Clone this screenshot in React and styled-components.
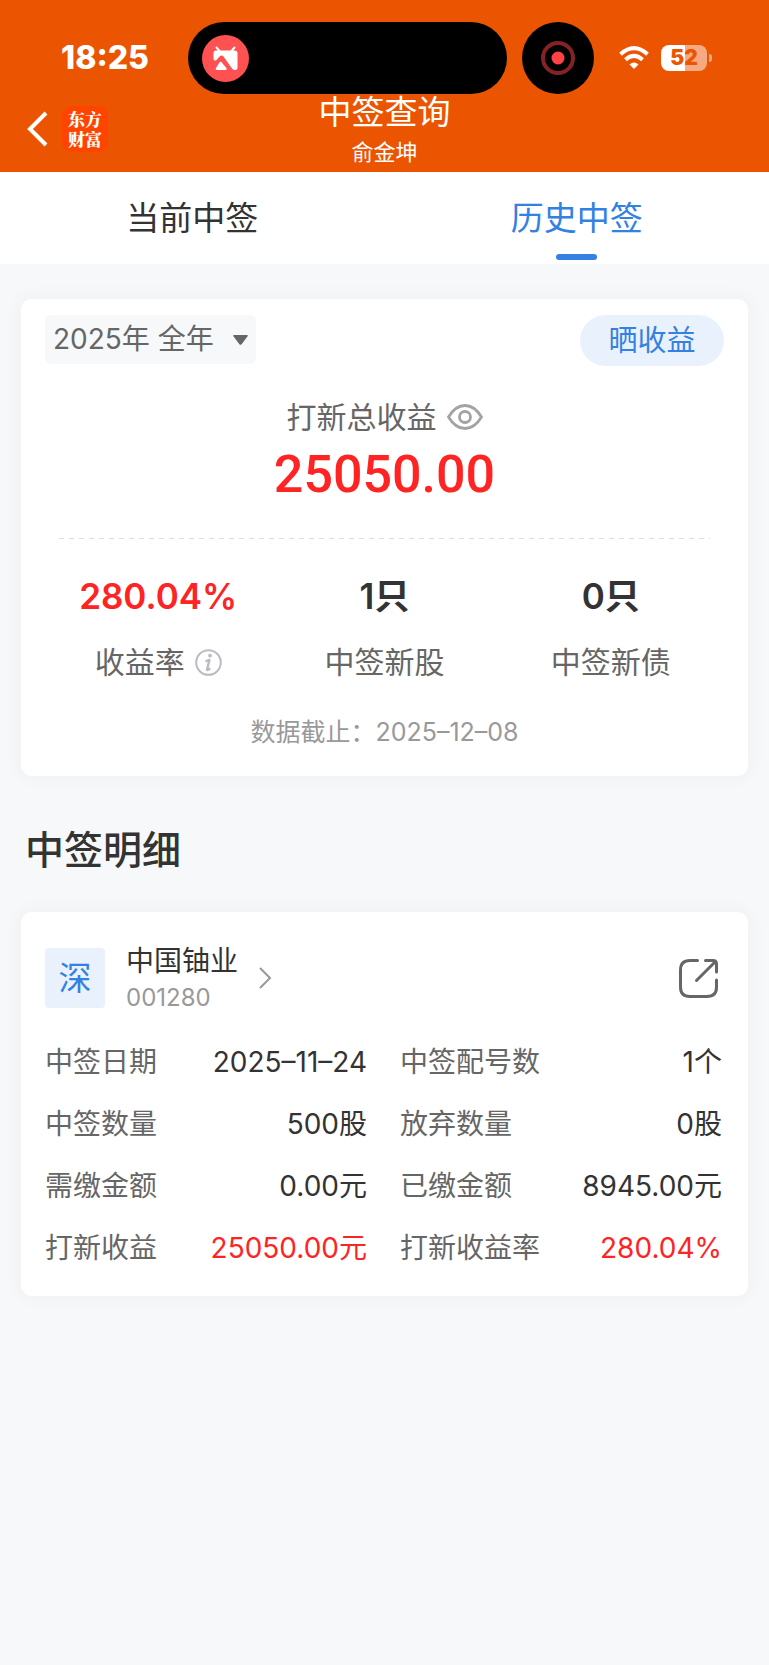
import React, { useState } from 'react'
import styled, { createGlobalStyle } from 'styled-components'

const colors = {
  brand: '#eb5502',
  blue: '#3381e3',
  paleBlue: '#e9f2fc',
  red: '#ff2424',
  text: '#333333',
  label: '#666666',
  muted: '#999999',
  page: '#f6f8fa',
}

const GlobalStyle = createGlobalStyle`
  * {
    box-sizing: border-box;
  }
  body {
    margin: 0;
    background: ${colors.page};
    color: ${colors.text};
    font-family: Inter, 'Noto Sans CJK SC', sans-serif;
  }
  button, select {
    margin: 0;
    padding: 0;
    border: 0;
    background: none;
    color: inherit;
    font: inherit;
    cursor: pointer;
  }
  h1, h2, h3, p, dl, dd {
    margin: 0;
    font-weight: 400;
  }
  svg {
    display: block;
    flex: none;
  }
`

const Header = styled.header`
  background: ${colors.brand};
  color: #fff;
`

const StatusBar = styled.div`
  display: flex;
  align-items: center;
  padding: 22px 57px 0 61px;
`

const Time = styled.time`
  width: 127px;
  font-size: 32px;
  line-height: 40px;
  font-weight: 800;
`

const Island = styled.div`
  display: flex;
  flex: 1;
  align-items: center;
  height: 72px;
  padding-left: 14px;
  border-radius: 36px;
  background: #000;
`

const Recorder = styled.div`
  display: flex;
  align-items: center;
  justify-content: center;
  width: 72px;
  height: 72px;
  margin: 0 25px 0 15px;
  border-radius: 50%;
  background: #000;
`

const Battery = styled.div`
  display: flex;
  align-items: center;
  gap: 2px;
  margin-left: 12px;
`

const BatteryLevel = styled.div`
  width: 46px;
  height: 26px;
  border-radius: 8px;
  background: linear-gradient(to right, #fff 52%, rgba(255, 255, 255, 0.5) 52%);
  color: ${colors.brand};
  font-size: 21px;
  line-height: 26px;
  font-weight: 900;
  text-align: center;
`

const BatteryTip = styled.div`
  width: 3px;
  height: 8px;
  border-radius: 0 4px 4px 0;
  background: rgba(255, 255, 255, 0.5);
`

const NavBar = styled.div`
  display: grid;
  grid-template-columns: 1fr auto 1fr;
  height: 78px;
`

const NavLeft = styled.div`
  display: flex;
  align-items: center;
  height: 70px;
  padding-left: 27px;
  gap: 14px;
`

const Logo = styled.div`
  display: flex;
  flex-direction: column;
  justify-content: center;
  width: 46px;
  height: 46px;
  border-radius: 9px;
  background: #ff4400;
  font-family: 'Noto Serif CJK SC', 'Noto Sans CJK SC', serif;
  font-size: 17px;
  line-height: 20px;
  font-weight: 900;
  text-align: center;
`

const NavTitle = styled.div`
  text-align: center;

  h1 {
    font-size: 33px;
    line-height: 36px;
  }
  p {
    margin-top: 6px;
    font-size: 22px;
    line-height: 32px;
  }
`

const Tabs = styled.nav`
  display: grid;
  grid-template-columns: 1fr 1fr;
  background: #fff;
`

const Tab = styled.button`
  display: flex;
  flex-direction: column;
  align-items: center;
  height: 92px;
  padding-top: 23px;
  font-size: 33px;
  line-height: 46px;
  color: ${props => (props.$active ? colors.blue : colors.text)};

  &::after {
    content: '';
    width: 41px;
    height: 6px;
    margin-top: 13px;
    border-radius: 3px;
    background: ${props => (props.$active ? colors.blue : 'transparent')};
  }
`

const Main = styled.main`
  padding: 35px 21px;
`

const Card = styled.section`
  padding: ${props => props.$padding};
  border-radius: 11px;
  background: #fff;
  box-shadow: 0 0 20px rgba(51, 51, 51, 0.05);
`

const Toolbar = styled.div`
  display: flex;
  align-items: flex-start;
  justify-content: space-between;
`

const Period = styled.label`
  display: grid;
  align-items: center;
  border-radius: 6px;
  background: ${colors.page};
  color: ${colors.label};

  select, svg {
    grid-area: 1 / 1;
  }
  select {
    width: 211px;
    height: 49px;
    padding: 0 30px 0 8px;
    font-size: 28px;
    line-height: 49px;
    appearance: none;
  }
  svg {
    justify-self: end;
    margin-right: 8px;
    pointer-events: none;
  }
`

const ShareButton = styled.button`
  width: 144px;
  height: 51px;
  border-radius: 26px;
  background: ${colors.paleBlue};
  color: ${colors.blue};
  font-size: 29px;
  line-height: 51px;
`

const Total = styled.div`
  padding: 28px 0;
  text-align: center;
`

const TotalLabel = styled.div`
  display: flex;
  align-items: center;
  justify-content: center;
  gap: 10px;
  color: ${colors.label};
  font-size: 30px;
  line-height: 46px;
`

const TotalValue = styled.p`
  color: ${colors.red};
  font-family: Roboto, sans-serif;
  font-size: 52px;
  line-height: 70px;
  font-weight: 500;
`

const Divider = styled.div`
  height: 1px;
  margin: 0 14px;
  background: repeating-linear-gradient(to right, #dddddd 0 5px, transparent 5px 10px);
`

const Stats = styled.dl`
  display: grid;
  grid-template-columns: repeat(3, 1fr);
  padding-top: 30px;
  text-align: center;
`

const Stat = styled.div`
  display: flex;
  flex-direction: column-reverse;
  gap: 16px;

  dt {
    display: flex;
    align-items: center;
    justify-content: center;
    gap: 10px;
    color: ${colors.label};
    font-size: 30px;
    line-height: 46px;
  }
  dd {
    color: ${props => (props.$red ? colors.red : colors.text)};
    font-size: 35px;
    line-height: 54px;
    font-weight: 600;
  }
`

const Deadline = styled.p`
  padding-top: 29px;
  color: ${colors.muted};
  font-size: 25px;
  line-height: 36px;
  text-align: center;
`

const SectionTitle = styled.h2`
  padding: 46px 4px 34px;
  font-size: 39px;
  line-height: 56px;
  font-weight: 500;
`

const StockHeader = styled.div`
  display: flex;
  align-items: center;
  justify-content: space-between;
  padding-right: 4px;
`

const StockLink = styled.a`
  display: flex;
  align-items: center;
  color: ${colors.text};
  text-decoration: none;

  h3 {
    font-size: 28px;
    line-height: 40px;
  }
  p {
    color: ${colors.muted};
    font-size: 24px;
    line-height: 34px;
  }
  svg {
    margin-left: 20px;
  }
`

const Market = styled.span`
  width: 60px;
  height: 60px;
  margin-right: 21px;
  border-radius: 4px;
  background: ${colors.paleBlue};
  color: ${colors.blue};
  font-size: 33px;
  line-height: 60px;
  text-align: center;
`

const Details = styled.dl`
  display: grid;
  grid-template-columns: 1fr 1fr;
  gap: 22px 33px;
  padding-top: 27px;
  font-size: 28px;
  line-height: 40px;
`

const Detail = styled.div`
  display: flex;
  justify-content: space-between;
  white-space: nowrap;

  dt {
    color: ${colors.label};
  }
  dd {
    color: ${props => (props.$red ? colors.red : colors.text)};
  }
`

const AppBadge = () => (
  <svg width="47" height="47" viewBox="0 0 47 47" aria-hidden="true">
    <circle cx="23.5" cy="23.5" r="23.5" fill="#fd5152" />
    <path d="M14.5 12.5l3 3.5M32.5 12.5l-3 3.5" stroke="#fff" strokeWidth="2" strokeLinecap="round" />
    <path
      d="M14 15.5h18.5q3 0 3 3v14q0 2.5-2.5 2.5q-2 0-3-1.5L21.5 21.5q-2-2-4 0l-3 3.5q-3 1.500-3-1.5v-5q0-3 2.5-3z"
      fill="#fff"
    />
    <path d="M17.5 27.5q1.2-1.3 2.3 0l4.5 5.5q1 2-1 2h-8.300q-2-.2-1-2z" fill="#fff" />
  </svg>
)

const WifiIcon = () => (
  <svg width="30" height="24" viewBox="0 0 30 24" fill="none" stroke="#fff" strokeWidth="4" aria-hidden="true">
    <path d="M1.5 8.2Q15-4 28.5 8.2" />
    <path d="M6.5 13.7Q15 6 23.5 13.7" />
    <path d="M15 23l-4.500-4.600q4.500-3.800 9 0z" fill="#fff" stroke="none" />
  </svg>
)

const EyeIcon = () => (
  <svg width="36" height="26" viewBox="0 0 36 26" fill="none" stroke="#a3a3a3" strokeWidth="2.8">
    <path d="M1.5 13C6 5.5 11 1.5 18 1.5S30 5.5 34.5 13C30 20.5 25 24.5 18 24.5S6 20.5 1.5 13z" />
    <circle cx="18" cy="13" r="5.5" />
  </svg>
)

const InfoIcon = () => (
  <svg width="27" height="27" viewBox="0 0 27 27" fill="none" stroke="#b9bcc4" aria-hidden="true">
    <circle cx="13.5" cy="13.5" r="12.3" strokeWidth="2" />
    <circle cx="15" cy="6.7" r="1.9" fill="#b9bcc4" stroke="none" />
    <path d="M10.5 12.3l4-1.3-2.5 9.5q-.3 1.3 3.3-1" strokeWidth="2.4" strokeLinejoin="round" />
  </svg>
)

const OpenIcon = () => (
  <svg width="39" height="39" viewBox="0 0 39 39" fill="none" stroke={colors.label} strokeWidth="3" strokeLinecap="round">
    <path d="M18.5 1.5H11Q1.5 1.5 1.5 11v17q0 9.5 9.5 9.5h17q9.5 0 9.5-9.5v-7" />
    <path d="M26.5 1.5h7.5q3.5 0 3.5 3.5v8M36 3L17.5 21.5" />
  </svg>
)

const stats = [
  { label: '收益率', value: '280.04%', red: true, info: true },
  { label: '中签新股', value: '1只' },
  { label: '中签新债', value: '0只' },
]

const details = [
  { label: '中签日期', value: '2025–11–24' },
  { label: '中签配号数', value: '1个' },
  { label: '中签数量', value: '500股' },
  { label: '放弃数量', value: '0股' },
  { label: '需缴金额', value: '0.00元' },
  { label: '已缴金额', value: '8945.00元' },
  { label: '打新收益', value: '25050.00元', red: true },
  { label: '打新收益率', value: '280.04%', red: true },
]

const App = () => {
  const [tab, setTab] = useState('历史中签')
  const [visible, setVisible] = useState(true)

  return (
    <>
      <GlobalStyle />
      <Header>
        <StatusBar>
          <Time>18:25</Time>
          <Island>
            <AppBadge />
          </Island>
          <Recorder>
            <svg width="34" height="34" viewBox="0 0 34 34" aria-hidden="true">
              <circle cx="17" cy="17" r="15" fill="none" stroke="#842226" strokeWidth="4" />
              <circle cx="17" cy="17" r="6.5" fill="#ff4245" />
            </svg>
          </Recorder>
          <WifiIcon />
          <Battery>
            <BatteryLevel>52</BatteryLevel>
            <BatteryTip />
          </Battery>
        </StatusBar>
        <NavBar>
          <NavLeft>
            <button type="button" aria-label="返回">
              <svg width="21" height="36" viewBox="0 0 21 36" fill="none" stroke="#fff" strokeWidth="4">
                <path d="M19 2L3 18l16 16" />
              </svg>
            </button>
            <Logo>
              <span>东方</span>
              <span>财富</span>
            </Logo>
          </NavLeft>
          <NavTitle>
            <h1>中签查询</h1>
            <p>俞金坤</p>
          </NavTitle>
        </NavBar>
      </Header>
      <Tabs>
        {['当前中签', '历史中签'].map(name => (
          <Tab key={name} type="button" $active={tab === name} onClick={() => setTab(name)}>
            {name}
          </Tab>
        ))}
      </Tabs>
      <Main>
        <Card $padding="16px 24px 26px">
          <Toolbar>
            <Period>
              <select aria-label="统计区间" defaultValue="2025">
                <option value="2025">2025年 全年</option>
              </select>
              <svg width="15" height="10" viewBox="0 0 15 10" aria-hidden="true">
                <path d="M1 0h13q1.5 0 .6 1.2l-6 8q-1.1 1.2-2.2 0l-6-8Q-.5 0 1 0z" fill={colors.label} />
              </svg>
            </Period>
            <ShareButton type="button">晒收益</ShareButton>
          </Toolbar>
          <Total>
            <TotalLabel>
              打新总收益
              <button type="button" aria-label="显示或隐藏收益" onClick={() => setVisible(!visible)}>
                <EyeIcon />
              </button>
            </TotalLabel>
            <TotalValue>{visible ? '25050.00' : '****'}</TotalValue>
          </Total>
          <Divider />
          <Stats>
            {stats.map(item => (
              <Stat key={item.label} $red={item.red}>
                <dt>
                  {item.label}
                  {item.info && <InfoIcon />}
                </dt>
                <dd>{item.value}</dd>
              </Stat>
            ))}
          </Stats>
          <Deadline>数据截止：2025–12–08</Deadline>
        </Card>
        <SectionTitle>中签明细</SectionTitle>
        <Card $padding="29px 26px 28px 24px">
          <StockHeader>
            <StockLink href="#001280">
              <Market>深</Market>
              <div>
                <h3>中国铀业</h3>
                <p>001280</p>
              </div>
              <svg width="14" height="22" viewBox="0 0 14 22" fill="none" stroke={colors.muted} strokeWidth="2">
                <path d="M2 1l10 10L2 21" />
              </svg>
            </StockLink>
            <button type="button" aria-label="分享">
              <OpenIcon />
            </button>
          </StockHeader>
          <Details>
            {details.map(item => (
              <Detail key={item.label} $red={item.red}>
                <dt>{item.label}</dt>
                <dd>{item.value}</dd>
              </Detail>
            ))}
          </Details>
        </Card>
      </Main>
    </>
  )
}

export default App
